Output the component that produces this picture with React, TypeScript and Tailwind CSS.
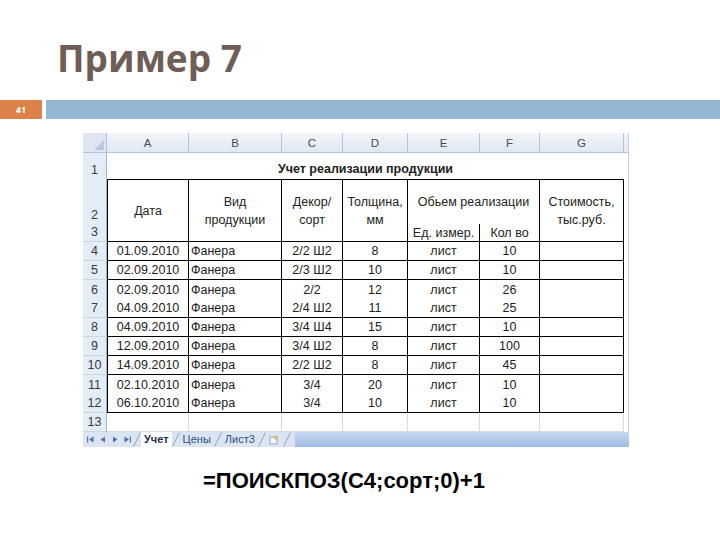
import React from "react";

const data: string[][] = [
  ["01.09.2010", "Фанера", "2/2 Ш2", "8", "лист", "10"],
  ["02.09.2010", "Фанера", "2/3 Ш2", "10", "лист", "10"],
  ["02.09.2010", "Фанера", "2/2", "12", "лист", "26"],
  ["04.09.2010", "Фанера", "2/4 Ш2", "11", "лист", "25"],
  ["04.09.2010", "Фанера", "3/4 Ш4", "15", "лист", "10"],
  ["12.09.2010", "Фанера", "3/4 Ш2", "8", "лист", "100"],
  ["14.09.2010", "Фанера", "2/2 Ш2", "8", "лист", "45"],
  ["02.10.2010", "Фанера", "3/4", "20", "лист", "10"],
  ["06.10.2010", "Фанера", "3/4", "10", "лист", "10"],
];

function RowHdr({ n, noBottom }: { n: number; noBottom?: boolean }) {
  return (
    <div
      className={`flex items-end justify-center pb-[2px] bg-[#e4ecf7] border-r border-[#9eb6ce] text-[12.5px] leading-[14px] text-[#3a3a3a] ${
        noBottom ? "" : "border-b border-b-[#c9d6e6]"
      }`}
    >
      {n}
    </div>
  );
}

function ColHdr({ c }: { c: string }) {
  return (
    <div className="flex items-center justify-center bg-gradient-to-b from-[#f3f6fb] to-[#dfe7f2] border-r border-b border-[#b3c5da] text-[11.5px] text-[#4a4a4a]">
      {c}
    </div>
  );
}

function Strip({ header, span2 }: { header?: boolean; span2?: boolean }) {
  return (
    <div
      className={`${header ? "bg-gradient-to-b from-[#f3f6fb] to-[#dfe7f2] border-b border-[#b3c5da]" : "bg-white"} border-r border-r-[#c8d0dc] ${
        span2 ? "row-span-2" : ""
      }`}
    />
  );
}

function NavGlyphs() {
  return (
    <div className="flex items-center gap-[6px] pl-[4px] w-[50px] text-[#4f73a8]">
      <svg width="7" height="7" viewBox="0 0 7 7">
        <rect x="0" y="0.5" width="1.2" height="6" fill="currentColor" />
        <path d="M6.5 0.5 L2 3.5 L6.5 6.5 Z" fill="currentColor" />
      </svg>
      <svg width="6" height="7" viewBox="0 0 6 7">
        <path d="M5 0.5 L0.5 3.5 L5 6.5 Z" fill="currentColor" />
      </svg>
      <svg width="6" height="7" viewBox="0 0 6 7">
        <path d="M1 0.5 L5.5 3.5 L1 6.5 Z" fill="currentColor" />
      </svg>
      <svg width="7" height="7" viewBox="0 0 7 7">
        <path d="M0.5 0.5 L5 3.5 L0.5 6.5 Z" fill="currentColor" />
        <rect x="5.8" y="0.5" width="1.2" height="6" fill="currentColor" />
      </svg>
    </div>
  );
}

function Slant() {
  return (
    <svg width="8" height="15" viewBox="0 0 8 15" className="shrink-0">
      <path d="M0.5 14.5 L7.5 0.5" stroke="#8aa6cc" strokeWidth="1" fill="none" />
    </svg>
  );
}

export default function App() {
  const blk = "border-black";
  return (
    <div className="w-[720px] h-[540px] bg-white overflow-hidden font-['Liberation_Sans',Arial,sans-serif]">
      {/* Title */}
      <div className="h-[100px] pt-[39px] pl-[57px]">
        <div className="font-['Open_Sans',sans-serif] font-bold text-[37px] leading-none text-[#705d55]">
          Пример 7
        </div>
      </div>

      {/* Number bar */}
      <div className="flex h-[19px] gap-[4px]">
        <div className="w-[42px] bg-[#dc8148] flex items-center justify-center text-[9px] font-bold text-white font-['Open_Sans',sans-serif]">
          41
        </div>
        <div className="flex-1 bg-[#95b6d3]" />
      </div>

      {/* Spreadsheet */}
      <div className="mt-[14px] ml-[83px] w-[546px] text-[#222]">
        <div className="grid grid-cols-[24px_82px_93px_61px_65px_72px_60px_84px_5px] grid-rows-[20px_27px_44px_18px_repeat(10,19px)] text-[12.5px] leading-[14px]">
          {/* Header row */}
          <div className="relative bg-[#dde6f2] border-r border-b border-[#b3c5da]">
            <svg width="10" height="10" viewBox="0 0 10 10" className="absolute right-[2px] bottom-[2px]">
              <path d="M10 0 L10 10 L0 10 Z" fill="#b7c9df" />
            </svg>
          </div>
          {["A", "B", "C", "D", "E", "F", "G"].map((c) => (
            <ColHdr key={c} c={c} />
          ))}
          <Strip header />

          {/* Row 1 */}
          <div className="flex items-end justify-center pb-[3px] bg-[#e4ecf7] border-r border-[#9eb6ce] text-[12.5px] leading-[14px] text-[#3a3a3a]">
            1
          </div>
          <div className={`col-span-7 flex items-end justify-center pb-[3px] font-bold border-b ${blk}`}>
            Учет реализации продукции
          </div>
          <Strip />

          {/* Row 2 */}
          <RowHdr n={2} noBottom />
          <div className={`row-span-2 flex items-center justify-center border-l border-r border-b ${blk}`}>Дата</div>
          <div className={`row-span-2 flex items-center justify-center text-center leading-[18px] border-r border-b ${blk}`}>
            Вид
            <br />
            продукции
          </div>
          <div className={`row-span-2 flex items-center justify-center text-center leading-[18px] border-r border-b ${blk}`}>
            Декор/
            <br />
            сорт
          </div>
          <div className={`row-span-2 flex items-center justify-center text-center leading-[18px] border-r border-b ${blk}`}>
            Толщина,
            <br />
            мм
          </div>
          <div className={`col-span-2 flex items-center justify-center border-r ${blk}`}>Обьем реализации</div>
          <div className={`row-span-2 flex items-center justify-center text-center leading-[18px] border-r border-b ${blk}`}>
            Стоимость,
            <br />
            тыс.руб.
          </div>
          <Strip span2 />

          {/* Row 3 */}
          <RowHdr n={3} />
          <div className={`flex items-center justify-center border-r border-b ${blk}`}>Ед. измер.</div>
          <div className={`flex items-center justify-center border-r border-b ${blk}`}>Кол во</div>

          {/* Data rows */}
          {data.map((r, i) => {
            const n = i + 4;
            const nb = n === 6 || n === 11;
            const b = nb ? "" : "border-b";
            return (
              <React.Fragment key={n}>
                <RowHdr n={n} noBottom={nb} />
                <div className={`flex items-center justify-center border-l border-r ${b} ${blk}`}>{r[0]}</div>
                <div className={`flex items-center pl-[2px] border-r ${b} ${blk}`}>{r[1]}</div>
                <div className={`flex items-center justify-center border-r ${b} ${blk}`}>{r[2]}</div>
                <div className={`flex items-center justify-center border-r ${b} ${blk}`}>{r[3]}</div>
                <div className={`flex items-center justify-center border-r ${b} ${blk}`}>{r[4]}</div>
                <div className={`flex items-center justify-center border-r ${b} ${blk}`}>{r[5]}</div>
                <div className={`border-r ${b} ${blk}`} />
                <Strip />
              </React.Fragment>
            );
          })}

          {/* Row 13 */}
          <RowHdr n={13} />
          {[0, 1, 2, 3, 4, 5, 6].map((k) => (
            <div key={k} className="border-r border-b border-[#d4dbe6]" />
          ))}
          <Strip />
        </div>

        {/* Sheet tabs */}
        <div className="flex h-[15px] items-stretch bg-[#dbe5f2] text-[11px] leading-[15px]">
          <NavGlyphs />
          <Slant />
          <div className="bg-white px-[3px] font-bold text-[#1d2f4d]">Учет</div>
          <Slant />
          <div className="px-[3px] text-[#2c4f85]">Цены</div>
          <Slant />
          <div className="px-[3px] text-[#2c4f85]">Лист3</div>
          <Slant />
          <div className="flex items-center px-[3px]">
            <svg width="11" height="10" viewBox="0 0 11 10">
              <rect x="1" y="2" width="7" height="7" fill="#f4f7fb" stroke="#7f97b8" strokeWidth="0.8" />
              <path d="M7 0.5 L8 2.5 L10 3 L8 3.5 L7 5.5 L6 3.5 L4 3 L6 2.5 Z" fill="#e8b83a" />
            </svg>
          </div>
          <Slant />
          <div className="flex-1 ml-[4px] bg-gradient-to-b from-[#c6d8ef] to-[#9fbce4]" />
        </div>
      </div>

      {/* Formula */}
      <div className="mt-[21px] pl-[203px] font-['Liberation_Sans',Arial,sans-serif] font-bold text-[22px] leading-[26px] text-black">
        =ПОИСКПОЗ(C4;сорт;0)+1
      </div>
    </div>
  );
}
